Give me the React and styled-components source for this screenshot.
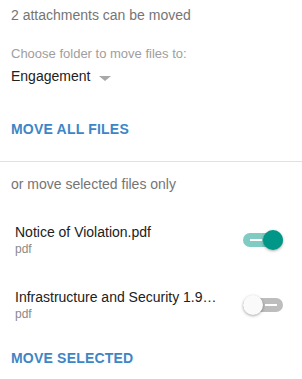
import styled, { createGlobalStyle } from "styled-components";

const GlobalStyle = createGlobalStyle`
  html, body {
    margin: 0;
    padding: 0;
    background: #ffffff;
  }
  body {
    font-family: "Liberation Sans", Arial, sans-serif;
  }
`;

const Panel = styled.div`
  width: 302px;
  height: 379px;
  overflow: hidden;
  background: #ffffff;
`;

const Section = styled.section`
  display: flex;
  flex-direction: column;
  padding: ${(p) => p.$padding};
`;

const Summary = styled.p`
  margin: 0;
  font-size: 14px;
  line-height: 18px;
  color: #757575;
`;

const FieldLabel = styled.label`
  font-size: 13px;
  line-height: 16px;
  color: #9e9e9e;
  margin-top: 22px;
`;

const Select = styled.div`
  display: flex;
  align-items: center;
  gap: 9px;
  margin-top: 5px;
  font-size: 14px;
  line-height: 18px;
  color: #212121;
`;

const Caret = styled.span`
  width: 0;
  height: 0;
  border-left: 6px solid transparent;
  border-right: 6px solid transparent;
  border-top: 5px solid #a8a8a8;
  margin-top: 5px;
`;

const ActionButton = styled.button`
  align-self: flex-start;
  background: none;
  border: none;
  padding: 0;
  margin-top: ${(p) => p.$top};
  font-family: inherit;
  font-size: 14px;
  font-weight: bold;
  line-height: 18px;
  letter-spacing: 0.2px;
  color: #3d86c6;
  cursor: pointer;
`;

const Divider = styled.hr`
  margin: 0;
  border: none;
  border-top: 1px solid #e0e0e0;
`;

const FileList = styled.ul`
  list-style: none;
  margin: 30px 0 0;
  padding: 0;
  display: flex;
  flex-direction: column;
  gap: 31px;
`;

const FileRow = styled.li`
  display: flex;
  align-items: center;
  justify-content: space-between;
  padding: 0 8px 0 4px;
`;

const FileInfo = styled.div`
  display: flex;
  flex-direction: column;
  min-width: 0;
`;

const FileName = styled.span`
  font-size: 14px;
  line-height: 18px;
  color: #212121;
  white-space: nowrap;
`;

const FileType = styled.span`
  font-size: 12px;
  line-height: 16px;
  color: #8a8a8a;
`;

const Track = styled.span`
  position: relative;
  width: 40px;
  height: 14px;
  border-radius: 7px;
  background: ${(p) => (p.$on ? "#80cbc4" : "#bdbdbd")};
  flex-shrink: 0;

  &::before {
    content: "";
    position: absolute;
    top: 6px;
    height: 2px;
    width: 12px;
    background: #ffffff;
    left: ${(p) => (p.$on ? "7px" : "22px")};
  }
`;

const Thumb = styled.span`
  position: absolute;
  top: -3px;
  left: ${(p) => (p.$on ? "20px" : "0")};
  width: 20px;
  height: 20px;
  border-radius: 50%;
  background: ${(p) => (p.$on ? "#009688" : "#fafafa")};
  box-shadow: 0 1px 3px rgba(0, 0, 0, 0.35);
`;

function Toggle({ on }) {
  return (
    <Track $on={on}>
      <Thumb $on={on} />
    </Track>
  );
}

const files = [
  { name: "Notice of Violation.pdf", type: "pdf", on: true },
  { name: "Infrastructure and Security 1.9…", type: "pdf", on: false },
];

export default function App() {
  return (
    <Panel>
      <GlobalStyle />
      <Section $padding="6px 11px 23px">
        <Summary>2 attachments can be moved</Summary>
        <FieldLabel>Choose folder to move files to:</FieldLabel>
        <Select>
          Engagement
          <Caret />
        </Select>
        <ActionButton $top="35px">MOVE ALL FILES</ActionButton>
      </Section>
      <Divider />
      <Section $padding="13px 11px 0">
        <Summary>or move selected files only</Summary>
        <FileList>
          {files.map((f) => (
            <FileRow key={f.name}>
              <FileInfo>
                <FileName>{f.name}</FileName>
                <FileType>{f.type}</FileType>
              </FileInfo>
              <Toggle on={f.on} />
            </FileRow>
          ))}
        </FileList>
        <ActionButton $top="27px">MOVE SELECTED</ActionButton>
      </Section>
    </Panel>
  );
}
